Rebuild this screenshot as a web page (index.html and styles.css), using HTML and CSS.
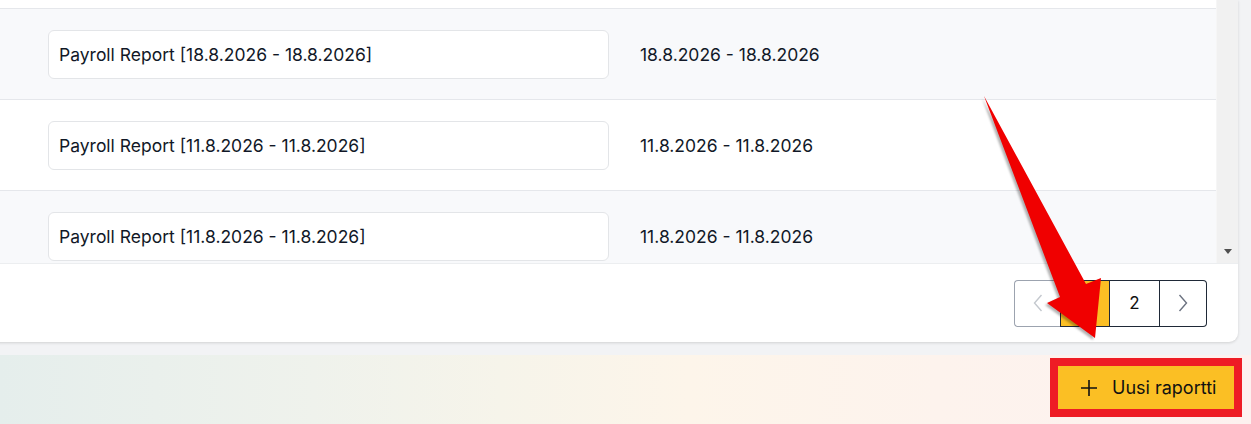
FILE: index.html
```html
<!DOCTYPE html>
<html lang="fi">
<head>
<meta charset="utf-8">
<title>Raportit</title>
<link rel="stylesheet" href="styles.css">
</head>
<body>
<div class="page">
  <section class="card">
    <div class="table-wrap">
      <div class="rows">
        <div class="row row-white"></div>
        <div class="row row-gray">
          <div class="cell-name"><div class="name-box">Payroll Report [18.8.2026 - 18.8.2026]</div></div>
          <div class="cell-date">18.8.2026 - 18.8.2026</div>
        </div>
        <div class="row row-white">
          <div class="cell-name"><div class="name-box">Payroll Report [11.8.2026 - 11.8.2026]</div></div>
          <div class="cell-date">11.8.2026 - 11.8.2026</div>
        </div>
        <div class="row row-gray">
          <div class="cell-name"><div class="name-box">Payroll Report [11.8.2026 - 11.8.2026]</div></div>
          <div class="cell-date">11.8.2026 - 11.8.2026</div>
        </div>
      </div>
      <div class="scrollbar"><span class="scroll-down"></span></div>
    </div>
    <div class="card-footer">
      <nav class="pagination">
        <button class="page-btn page-prev" disabled>
          <svg width="10" height="18" viewBox="0 0 10 18"><path d="M8.5 1 L1.5 9 L8.5 17" fill="none" stroke="#c4c8ce" stroke-width="1.4"/></svg>
        </button>
        <button class="page-btn page-active">1</button>
        <button class="page-btn">2</button>
        <button class="page-btn page-next">
          <svg width="10" height="18" viewBox="0 0 10 18"><path d="M1.5 1 L8.5 9 L1.5 17" fill="none" stroke="#6b7280" stroke-width="1.4"/></svg>
        </button>
      </nav>
    </div>
  </section>
  <div class="action-bar">
    <div class="highlight">
      <button class="new-report">
        <svg class="plus" width="18" height="18" viewBox="0 0 18 18"><path d="M9 1 V17 M1 9 H17" stroke="#111" stroke-width="1.6" fill="none"/></svg>
        <span>Uusi raportti</span>
      </button>
    </div>
  </div>
  <svg class="annotation-arrow" width="1251" height="424" viewBox="0 0 1251 424">
    <polygon points="984,96 1086,284 1101,278 1095,338 1047,303 1060,297" fill="#f00000"/>
  </svg>
</div>
</body>
</html>
```

FILE: styles.css
```css
* { box-sizing: border-box; }
html, body { margin: 0; padding: 0; }
body {
  background: #f2f3f5;
  font-family: Inter, "Noto Sans", "Liberation Sans", sans-serif;
  color: #111827;
  overflow: hidden;
}
.page {
  position: relative;
  width: 1251px;
  height: 424px;
  overflow: hidden;
}
.card {
  margin-left: -20px;
  width: 1258px;
  background: #fff;
  border-radius: 0 0 9px 9px;
  box-shadow: 0 1px 3px rgba(0, 0, 0, 0.14);
  overflow: hidden;
}
.table-wrap {
  display: flex;
  height: 263px;
  overflow: hidden;
}
.rows {
  flex: 1;
  margin-top: -82px;
}
.row {
  display: flex;
  align-items: center;
  height: 91px;
  border-bottom: 1px solid #e5e7eb;
  padding-left: 68px;
}
.row-white { background: #fff; }
.row-gray { background: #f8f9fb; }
.cell-name { width: 561px; }
.name-box {
  height: 49px;
  display: flex;
  align-items: center;
  padding-left: 10px;
  background: #fff;
  border: 1px solid #e3e5e8;
  border-radius: 6px;
  font-size: 17.5px;
  color: #111827;
}
.cell-date {
  padding-left: 31px;
  font-size: 17.5px;
  color: #111827;
}
.scrollbar {
  width: 22px;
  background: #f1f1f1;
  border-left: 1px solid #f6f6f6;
  display: flex;
  flex-direction: column;
  justify-content: flex-end;
  align-items: center;
  padding-bottom: 9px;
}
.scroll-down {
  width: 0;
  height: 0;
  border-left: 4px solid transparent;
  border-right: 4px solid transparent;
  border-top: 5px solid #505050;
}
.card-footer {
  height: 79px;
  display: flex;
  align-items: center;
  justify-content: flex-end;
  padding-right: 31px;
  border-top: 1px solid #eceef0;
}
.pagination {
  display: flex;
  height: 47px;
}
.page-btn {
  height: 47px;
  width: 50px;
  display: flex;
  align-items: center;
  justify-content: center;
  background: #fff;
  border: 1px solid #1f2937;
  border-left: none;
  font-family: Inter, "Noto Sans", sans-serif;
  font-size: 17px;
  color: #111;
  padding: 0;
}
.page-prev {
  width: 46px;
  border: 1px solid #9ca3af;
  border-right: none;
  border-radius: 4px 0 0 4px;
}
.page-active {
  background: #fbbf24;
  border-left: 1px solid #1f2937;
}
.page-next {
  width: 47px;
  border-radius: 0 4px 4px 0;
}
.action-bar {
  margin-top: 13px;
  height: 69px;
  display: flex;
  justify-content: flex-end;
  align-items: flex-start;
  padding-top: 3px;
  padding-right: 9px;
  background: linear-gradient(90deg, #e5eeec 0%, #eff2ec 25%, #f6f4ea 40%, #fdf5ea 55%, #fdf3ed 75%, #fdf1ef 100%);
}
.highlight {
  border: 8px solid #ee1c25;
  background: #ee1c25;
}
.new-report {
  display: flex;
  align-items: center;
  gap: 14px;
  width: 176px;
  height: 43px;
  padding: 0 0 0 22px;
  border: none;
  background: #fbbf24;
  font-family: Inter, "Noto Sans", sans-serif;
  font-size: 18px;
  color: #111;
}
.plus { flex: none; }
.annotation-arrow {
  position: absolute;
  left: 0;
  top: 0;
  pointer-events: none;
  filter: drop-shadow(-2px 2px 1px rgba(0, 0, 0, 0.3));
}
```
